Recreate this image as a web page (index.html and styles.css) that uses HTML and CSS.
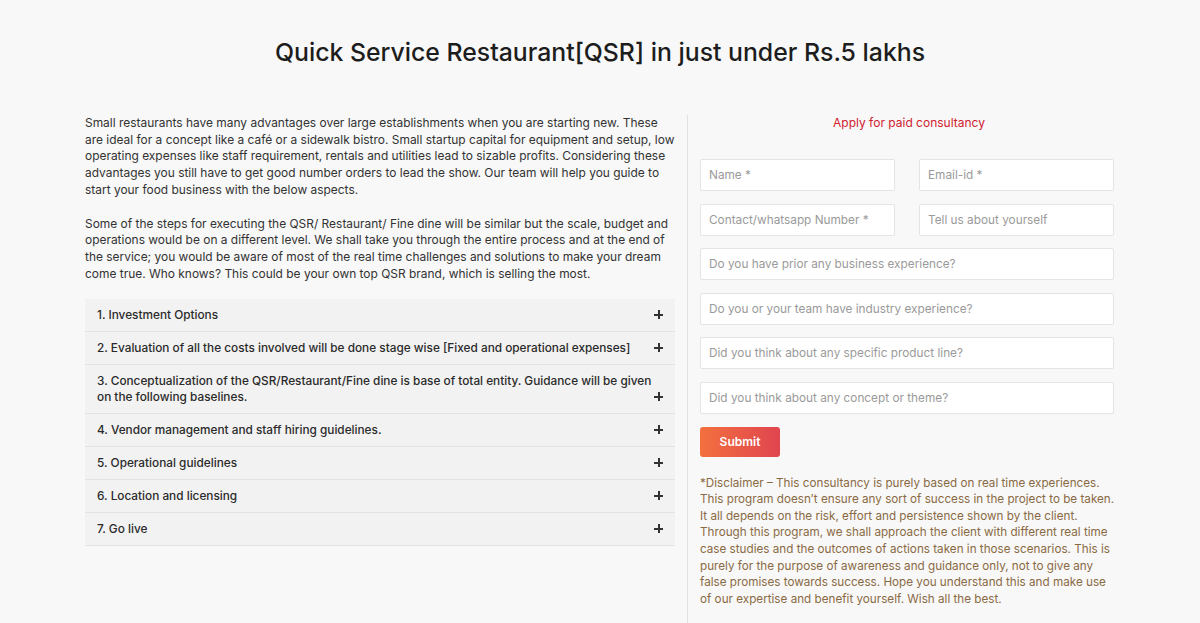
FILE: index.html
```html
<!DOCTYPE html>
<html>
	<head>
		<meta charset="utf-8">
		<title>Quick Service Restaurant</title>
		<link rel="stylesheet" href="styles.css">
	</head>
	<body>
		<h1 class="titulo">Quick Service Restaurant[QSR] in just under Rs.5 lakhs</h1>

		<div class="conteudo">
			<div class="esquerda">
				<p class="texto">Small restaurants have many advantages over large establishments when you are starting new. These are ideal for a concept like a café or a sidewalk bistro. Small startup capital for equipment and setup, low operating expenses like staff requirement, rentals and utilities lead to sizable profits. Considering these advantages you still have to get good number orders to lead the show. Our team will help you guide to start your food business with the below aspects.</p>
				<p class="texto">Some of the steps for executing the QSR/ Restaurant/ Fine dine will be similar but the scale, budget and operations would be on a different level. We shall take you through the entire process and at the end of the service; you would be aware of most of the real time challenges and solutions to make your dream come true. Who knows? This could be your own top QSR brand, which is selling the most.</p>

				<div class="acordeao">
					<div class="item"><span>1. Investment Options</span><i class="mais"></i></div>
					<div class="item"><span>2. Evaluation of all the costs involved will be done stage wise [Fixed and operational expenses]</span><i class="mais"></i></div>
					<div class="item"><span>3. Conceptualization of the QSR/Restaurant/Fine dine is base of total entity. Guidance will be given on the following baselines.</span><i class="mais"></i></div>
					<div class="item"><span>4. Vendor management and staff hiring guidelines.</span><i class="mais"></i></div>
					<div class="item"><span>5. Operational guidelines</span><i class="mais"></i></div>
					<div class="item"><span>6. Location and licensing</span><i class="mais"></i></div>
					<div class="item"><span>7. Go live</span><i class="mais"></i></div>
				</div>
			</div>

			<div class="direita">
				<p class="chamada">Apply for paid consultancy</p>
				<form class="formulario">
					<div class="linha">
						<input type="text" placeholder="Name *">
						<input type="text" placeholder="Email-id *">
					</div>
					<div class="linha">
						<input type="text" placeholder="Contact/whatsapp Number *">
						<input type="text" placeholder="Tell us about yourself">
					</div>
					<input type="text" placeholder="Do you have prior any business experience?">
					<input type="text" placeholder="Do you or your team have industry experience?">
					<input type="text" placeholder="Did you think about any specific product line?">
					<input type="text" placeholder="Did you think about any concept or theme?">
					<button type="button" class="enviar">Submit</button>
				</form>
				<p class="aviso">*Disclaimer – This consultancy is purely based on real time experiences. This program doesn’t ensure any sort of success in the project to be taken. It all depends on the risk, effort and persistence shown by the client. Through this program, we shall approach the client with different real time case studies and the outcomes of actions taken in those scenarios. This is purely for the purpose of awareness and guidance only, not to give any false promises towards success. Hope you understand this and make use of our expertise and benefit yourself. Wish all the best.</p>
			</div>
		</div>
	</body>
</html>
```

FILE: styles.css
```css
body { margin: 0; background: #f8f8f8; font-family: "Inter", "Noto Sans", sans-serif; color: #333; overflow: hidden;}

.titulo { margin: 0; padding: 37px 0 0; height: 78px; box-sizing: border-box; text-align: center; font-size: 24.8px; font-weight: 500; color: #1d1d1d;}

.conteudo { width: 1030px; margin: 0 auto; padding-top: 37px; display: flex;}

/* coluna da esquerda */
.esquerda { width: 590px; margin-right: 12px; flex: none;}
.texto { margin: 0 0 17px; font-size: 11.95px; line-height: 16.7px; color: #333;}
.item { display: flex; align-items: flex-end; justify-content: space-between; gap: 2px; background: #f2f2f2; border-bottom: 1px solid #e2e2e2; padding: 8px 12px 8px 12px; font-size: 11.8px; font-weight: 500; line-height: 16px; color: #2a2a2a;}
.mais { flex: none; position: relative; width: 9px; height: 9px; margin-bottom: 4px;}
.mais::before { content: ""; position: absolute; left: 0; top: 3.5px; width: 9px; height: 2px; background: #333;}
.mais::after { content: ""; position: absolute; left: 3.5px; top: 0; width: 2px; height: 9px; background: #333;}

/* coluna da direita */
.direita { flex: 1; border-left: 1px solid #e2e2e2; padding-left: 12px; min-height: 520px;}
.chamada { margin: 0; padding-top: 0; text-align: center; font-size: 12px; color: #d0202f;}
.formulario { margin-top: 29px; width: 414px; display: flex; flex-direction: column; gap: 12.6px;}
.linha { display: flex; justify-content: space-between;}
.linha input { width: 195px;}
input { box-sizing: border-box; height: 32px; border: 1px solid #e4e4e4; border-radius: 2px; background: #fff; padding: 0 8px; font-family: inherit; font-size: 11.8px; color: #333;}
input::placeholder { color: #9a9a9a;}
.enviar { width: 80px; height: 30px; border: none; border-radius: 3px; background: linear-gradient(to right, #f3703e, #e04550); color: #fff; font-family: inherit; font-size: 12px; font-weight: 600; cursor: pointer;}
.aviso { margin: 18px 0 0; width: 418px; font-size: 11.7px; line-height: 16.6px; color: #8a6a44;}
```
